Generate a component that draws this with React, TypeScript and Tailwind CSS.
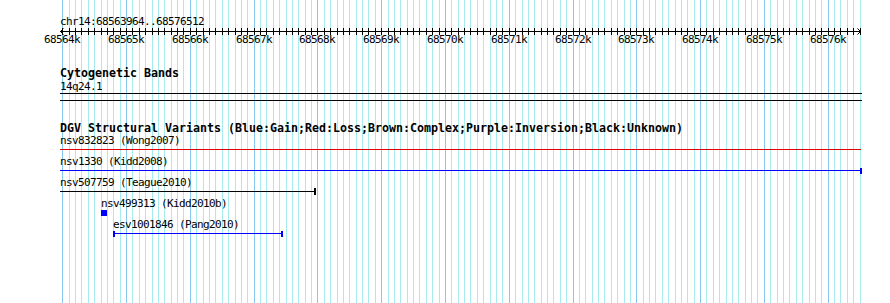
const START = 68563964;
const END = 68576512;
const X0 = 60;
const SCALE = 0.06378;
const px = (bp: number) => Math.round(X0 + (bp - START) * SCALE);

// grid/tick positions every 100bp, majors every 1kb
const ticks: { x: number; major: boolean; kb: number }[] = [];
for (let bp = Math.ceil(START / 100) * 100; bp <= END; bp += 100) {
  ticks.push({ x: px(bp), major: bp % 1000 === 0, kb: bp / 1000 });
}

function Grid() {
  return (
    <svg className="absolute inset-0" width={890} height={303} shapeRendering="crispEdges">
      {ticks.map((t) => (
        <rect key={t.x} x={t.x} y={0} width={1} height={303} fill={t.major ? "#86c8ee" : "#a8ebef"} />
      ))}
    </svg>
  );
}

function Ruler() {
  return (
    <svg width={890} height={6} className="block overflow-visible" shapeRendering="crispEdges">
      <rect x={60} y={3} width={801} height={1} fill="#000" />
      {ticks.map((t) => (
        <rect key={t.x} x={t.x} y={0} width={1} height={7} fill="#000" />
      ))}
      <path d="M63.5 0.5 L60.5 3.5 L63.5 6.5" stroke="#000" fill="none" shapeRendering="auto" />
      <path d="M857.5 0.5 L860.5 3.5 L857.5 6.5" stroke="#000" fill="none" shapeRendering="auto" />
    </svg>
  );
}

function Glyph({ children }: { children: React.ReactNode }) {
  return (
    <svg width={890} height={9} className="block overflow-visible" shapeRendering="crispEdges">
      {children}
    </svg>
  );
}

const label = "block h-[12px] leading-[12px] text-[11px] tracking-[-0.62px] whitespace-pre";
const title = "block h-[12px] leading-[12px] text-[11.63px] font-bold whitespace-pre pl-[60px]";

export default function App() {
  return (
    <div className="relative w-[890px] h-[303px] overflow-hidden bg-white text-black font-['DejaVu_Sans_Mono',monospace]">
      <Grid />
      <div className="relative flex flex-col pt-[16px]">
        <span className={`${label} pl-[60px]`}>chr14:68563964..68576512</span>
        <Ruler />
        <div className="relative h-[12px]">
          {ticks
            .filter((t) => t.major)
            .map((t) => (
              <span
                key={t.kb}
                className="absolute top-0 -translate-x-1/2 text-[11px] tracking-[-0.62px] leading-[12px]"
                style={{ left: t.x }}
              >
                {t.kb}k
              </span>
            ))}
        </div>

        {/* cytogenetic bands */}
        <span className={`${title} mt-[21px]`}>Cytogenetic Bands</span>
        <span className={`${label} mt-[2px] pl-[60px]`}>14q24.1</span>
        <svg width={890} height={8} className="block" shapeRendering="crispEdges">
          <rect x={60} y={0} width={802} height={1} fill="#000" />
          <rect x={60} y={7} width={802} height={1} fill="#000" />
        </svg>

        {/* DGV */}
        <span className={`${title} mt-[21px]`}>
          DGV Structural Variants (Blue:Gain;Red:Loss;Brown:Complex;Purple:Inversion;Black:Unknown)
        </span>
        <span className={`${label} mt-[1px] pl-[60px]`}>nsv832823 (Wong2007)</span>
        <Glyph>
          <rect x={60} y={2} width={801} height={1} fill="#e00000" />
        </Glyph>
        <span className={`${label} pl-[60px]`}>nsv1330 (Kidd2008)</span>
        <Glyph>
          <rect x={60} y={2} width={802} height={1} fill="#0000ff" />
          <rect x={860} y={0} width={2} height={6} fill="#0000ff" />
        </Glyph>
        <span className={`${label} pl-[60px]`}>nsv507759 (Teague2010)</span>
        <Glyph>
          <rect x={60} y={2} width={256} height={1} fill="#000" />
          <rect x={314} y={-1} width={2} height={7} fill="#000" />
        </Glyph>
        <span className={`${label} pl-[101px]`}>nsv499313 (Kidd2010b)</span>
        <Glyph>
          <rect x={101} y={0} width={6} height={6} fill="#0000ff" />
        </Glyph>
        <span className={`${label} pl-[113px]`}>esv1001846 (Pang2010)</span>
        <Glyph>
          <rect x={113} y={2} width={170} height={1} fill="#0000ff" />
          <rect x={113} y={0} width={2} height={6} fill="#0000ff" />
          <rect x={281} y={0} width={2} height={6} fill="#0000ff" />
        </Glyph>
      </div>
    </div>
  );
}
